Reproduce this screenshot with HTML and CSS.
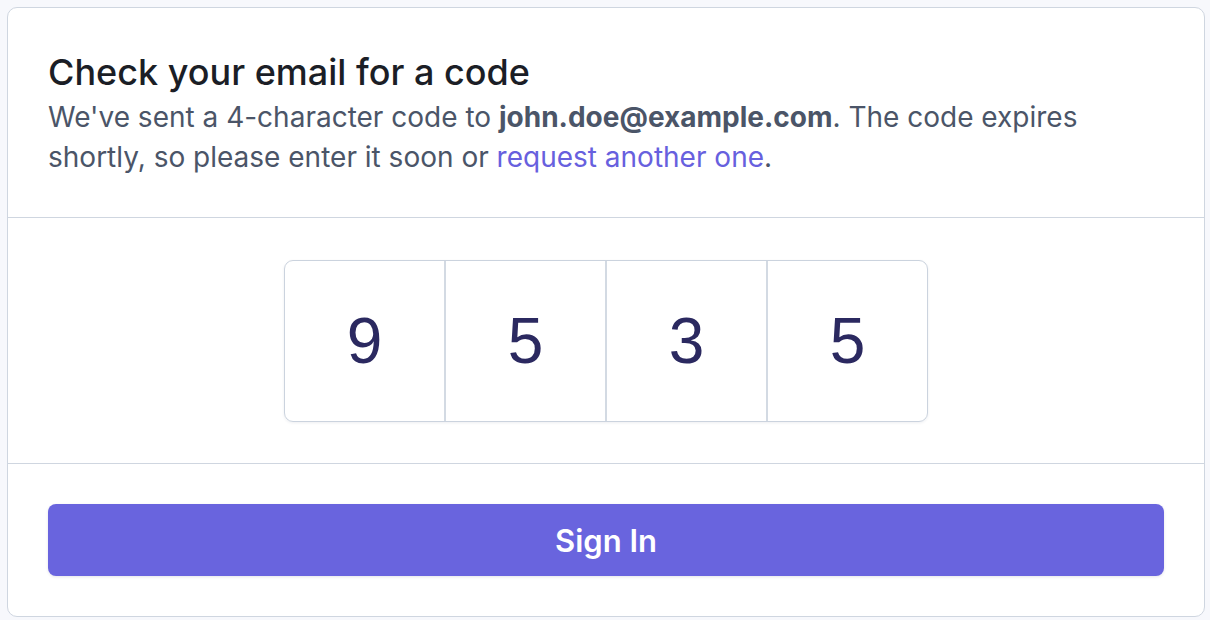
FILE: index.html
```html
<!DOCTYPE html>
<html lang="en">
<head>
<meta charset="utf-8">
<title>Check your email</title>
<link rel="stylesheet" href="styles.css">
</head>
<body>
<div class="card">
  <section class="head">
    <h1 class="title">Check your email for a code</h1>
    <p class="desc">We've sent a 4-character code to <strong>john.doe@example.com</strong>. The code expires shortly, so please enter it soon or <a class="link" href="#">request another one</a>.</p>
  </section>
  <section class="codes">
    <div class="code-group">
      <div class="cell">9</div>
      <div class="cell">5</div>
      <div class="cell">3</div>
      <div class="cell">5</div>
    </div>
  </section>
  <section class="actions">
    <button class="btn">Sign In</button>
  </section>
</div>
</body>
</html>
```
FILE: styles.css
```css
html, body {
  margin: 0;
  padding: 0;
}
body {
  background: #f7f8fc;
  padding: 7px 5px 3px 7px;
  font-family: Inter, "Noto Sans", sans-serif;
  font-optical-sizing: none;
}
.card {
  background: #ffffff;
  border: 1px solid #cfd6e0;
  border-radius: 10px;
  box-sizing: border-box;
  height: 610px;
  display: flex;
  flex-direction: column;
}
.head {
  padding: 40px 40px 40px 40px;
  border-bottom: 1px solid #cfd6e0;
  font-variation-settings: "opsz" 14;
}
.title {
  margin: 0;
  font-size: 36px;
  line-height: 49px;
  font-weight: 500;
  color: #1b1e26;
}
.desc {
  margin: 0;
  font-size: 28px;
  line-height: 40px;
  color: #4b5568;
}
.desc strong {
  font-weight: 700;
}
.link {
  color: #6760de;
  text-decoration: none;
}
.codes {
  height: 246px;
  box-sizing: border-box;
  border-bottom: 1px solid #cfd6e0;
  display: flex;
  align-items: center;
  justify-content: center;
}
.code-group {
  display: flex;
  border: 1px solid #cbd3de;
  border-radius: 9px;
  box-shadow: 0 1px 3px rgba(30, 40, 80, 0.08);
  height: 162px;
  box-sizing: border-box;
  overflow: hidden;
}
.cell {
  width: 159px;
  display: flex;
  align-items: center;
  justify-content: center;
  font-family: "Liberation Sans", Arial, sans-serif;
  font-size: 64px;
  color: #2b2960;
}
.cell + .cell {
  border-left: 2px solid #d3dae3;
}
.actions {
  flex: 1;
  padding: 40px 40px;
  box-sizing: border-box;
  display: flex;
}
.btn {
  flex: 1;
  height: 72px;
  border: none;
  border-radius: 8px;
  background: #6964de;
  color: #ffffff;
  font-family: Inter, "Noto Sans", sans-serif;
  font-variation-settings: "opsz" 14;
  font-size: 31px;
  font-weight: 600;
  box-shadow: 0 1px 3px rgba(30, 40, 80, 0.12);
}
```
